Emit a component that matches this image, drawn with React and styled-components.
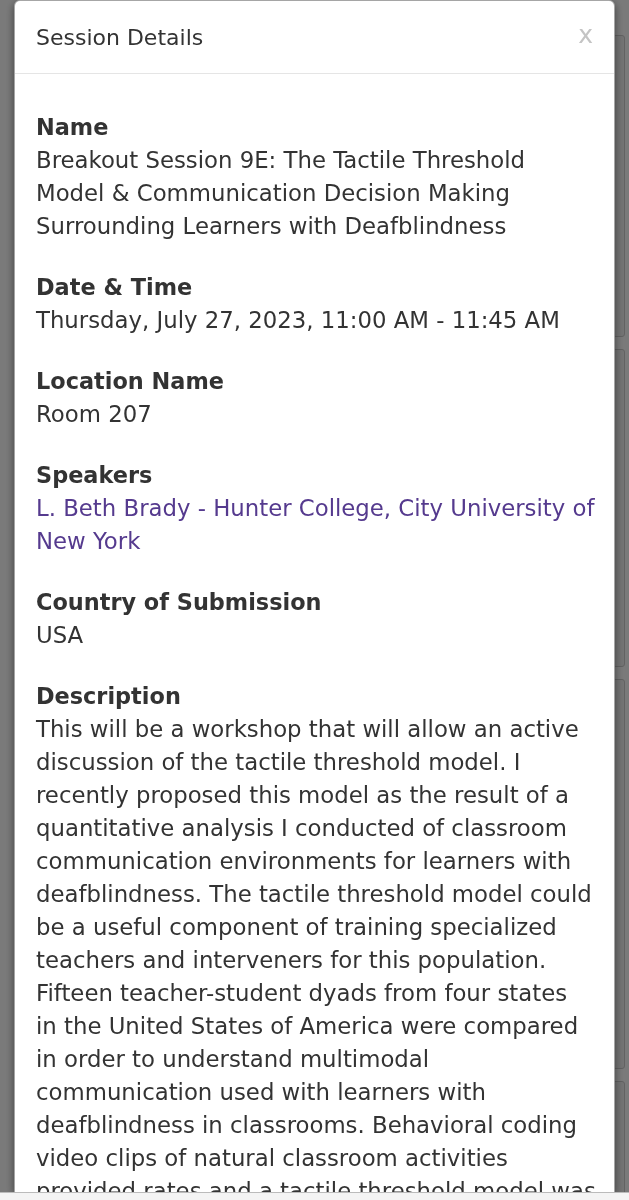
import React from 'react';
import styled, { createGlobalStyle } from 'styled-components';

const GlobalStyle = createGlobalStyle`
    html, body {
        margin: 0 ;
        padding: 0 ;
        height: 100% ;
        overflow: hidden ;
        background: #fff ;
        font-family: "DejaVu Sans", "Open Sans", sans-serif ;
    }
`;

const details = [
    { label: 'Name', value: 'Breakout Session 9E: The Tactile Threshold Model & Communication Decision Making Surrounding Learners with Deafblindness' },
    { label: 'Date & Time', value: 'Thursday, July 27, 2023, 11:00 AM - 11:45 AM' },
    { label: 'Location Name', value: 'Room 207' },
    { label: 'Speakers', value: 'L. Beth Brady - Hunter College, City University of New York', link: true },
    { label: 'Country of Submission', value: 'USA' },
    {
        label: 'Description',
        value: 'This will be a workshop that will allow an active discussion of the tactile threshold model. I recently proposed this model as the result of a quantitative analysis I conducted of classroom communication environments for learners with deafblindness. The tactile threshold model could be a useful component of training specialized teachers and interveners for this population. Fifteen teacher-student dyads from four states in\u00a0the United States of America were compared in order to understand multimodal communication used with learners with deafblindness in classrooms. Behavioral coding video clips of natural classroom activities provided rates and a tactile threshold model was developed to describe the communication decisions teachers make.',
    },
];

const backCards = [300, 316, 388, 300];

function App() {
    return (
        <>
            <GlobalStyle />
            <Page>
                {backCards.map((h, i) => (
                    <BackCard key={i} $height={h} />
                ))}
            </Page>
            <Overlay>
                <Modal>
                    <Header>
                        <HeaderTitle>Session Details</HeaderTitle>
                        <Close>x</Close>
                    </Header>
                    <Body>
                        {details.map((d) => (
                            <Section key={d.label}>
                                <Label>{d.label}</Label>
                                <Value $link={d.link}>{d.value}</Value>
                            </Section>
                        ))}
                    </Body>
                </Modal>
                <BottomBar />
            </Overlay>
        </>
    );
}

const Page = styled.div`
    display: flex ;
    flex-direction: column ;
    gap: 12px ;
    padding: 35px 4px 0 20px ;
`;
const BackCard = styled.div`
    height: ${(p) => p.$height}px ;
    border: 1px solid #ccc ;
    border-radius: 3px ;
    background: #f2f2f2 ;
`;
const Overlay = styled.div`
    position: fixed ;
    inset: 0 ;
    background: rgba(0, 0, 0, 0.52) ;
    display: flex ;
    flex-direction: column ;
    padding: 0 14px 0 14px ;
`;
const Modal = styled.div`
    flex: 1 ;
    min-height: 0 ;
    overflow: hidden ;
    background: #fff ;
    border: 1px solid rgba(0, 0, 0, 0.35) ;
    border-bottom: none ;
    border-radius: 6px 6px 0 0 ;
    box-shadow: 0 3px 9px rgba(0, 0, 0, 0.5) ;
    display: flex ;
    flex-direction: column ;
`;
const BottomBar = styled.div`
    height: 7px ;
    margin: 0 -14px ;
    background: #f4f4f4 ;
    border-top: 1px solid #bbb ;
`;
const Header = styled.div`
    height: 73px ;
    flex-shrink: 0 ;
    box-sizing: border-box ;
    display: flex ;
    align-items: center ;
    justify-content: space-between ;
    padding: 0 21px 0 21px ;
    border-bottom: 1px solid #e5e5e5 ;
`;
const HeaderTitle = styled.div`
    font-size: 22px ;
    color: #333 ;
`;
const Close = styled.div`
    font-size: 25px ;
    color: #c4c4c4 ;
    margin-top: -6px ;
    margin-right: 0 ;
`;
const Body = styled.div`
    padding: 37px 16px 0 21px ;
    display: flex ;
    flex-direction: column ;
    gap: 28px ;
`;
const Section = styled.div`
    display: flex ;
    flex-direction: column ;
`;
const Label = styled.div`
    font-size: 22.4px ;
    line-height: 33px ;
    font-weight: 700 ;
    color: #333 ;
`;
const Value = styled.div`
    font-size: 22.8px ;
    line-height: 33px ;
    color: ${(p) => (p.$link ? '#553a8e' : '#333')} ;
`;

export default App
